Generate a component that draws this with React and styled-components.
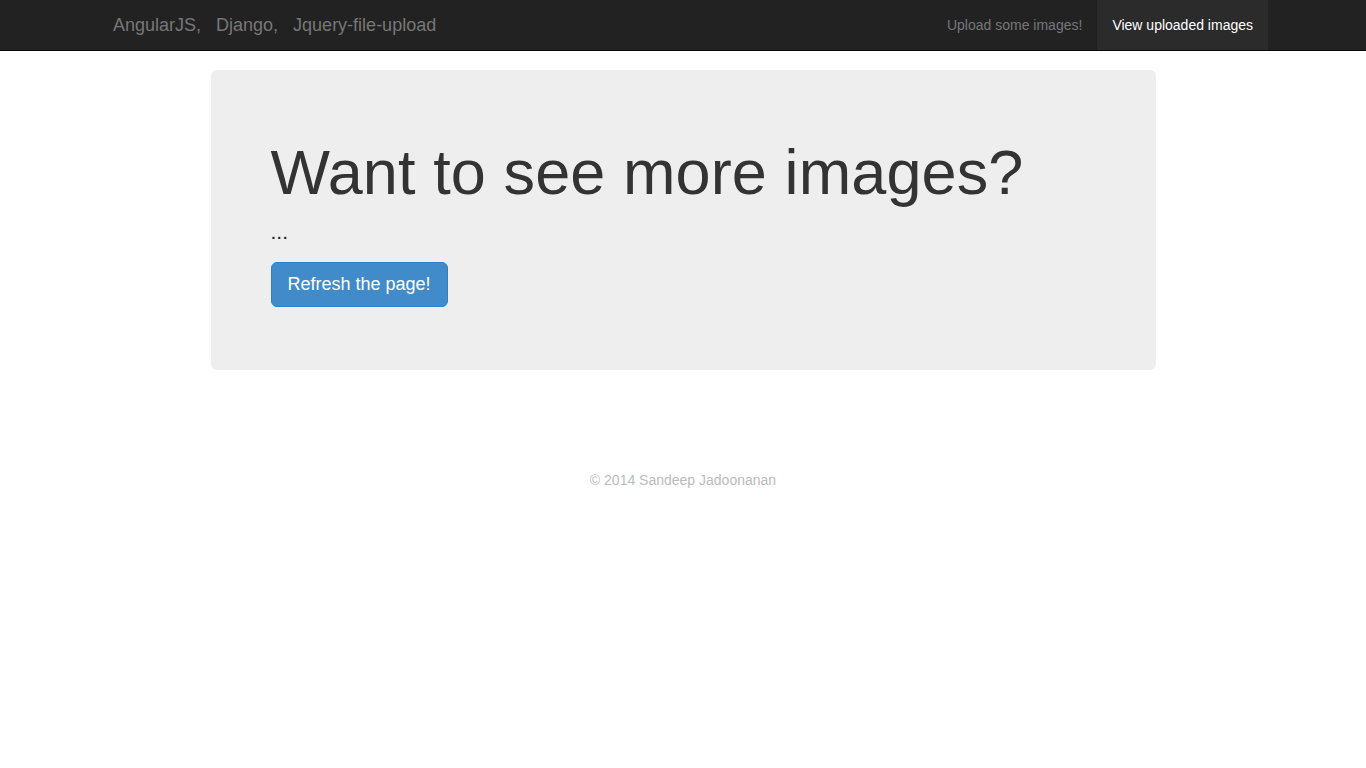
import styled, { createGlobalStyle } from 'styled-components'

const GlobalStyle = createGlobalStyle`
  * {
    box-sizing: border-box;
  }
  body {
    margin: 0;
    font-family: "Liberation Sans", Arial, sans-serif;
    font-size: 14px;
    line-height: 1.428571429;
    color: #333;
    background: #fff;
  }
`

const Navbar = styled.nav`
  height: 51px;
  background-color: #222;
  border-bottom: 1px solid #080808;
  margin-bottom: 19px;
`

const NavContainer = styled.div`
  width: 1170px;
  margin: 0 auto;
  padding: 0 15px;
  display: flex;
  justify-content: space-between;
  align-items: stretch;
  height: 50px;
`

const Brand = styled.a`
  display: flex;
  align-items: center;
  margin-left: -15px;
  padding: 15px;
  font-size: 18px;
  line-height: 20px;
  color: #777;
  text-decoration: none;
  white-space: pre;
`

const NavList = styled.ul`
  display: flex;
  list-style: none;
  margin: 0 -15px 0 0;
  padding: 0;
`

const NavLink = styled.a`
  display: block;
  padding: 15px;
  line-height: 20px;
  font-size: 14px;
  text-decoration: none;
  color: ${(props) => (props.active ? '#fff' : '#777')};
  background-color: ${(props) => (props.active ? '#2b2b2b' : 'transparent')};
`

const Jumbotron = styled.div`
  width: 945px;
  height: 300px;
  margin: 0 auto 30px;
  padding: 48px 60px;
  background-color: #eee;
  border-radius: 6px;
`

const Title = styled.h1`
  margin: 20px 0 10px;
  font-size: 63px;
  font-weight: 500;
  line-height: 1.1;
  letter-spacing: 0.1px;
  color: #333;
`

const Lead = styled.p`
  margin: 0 0 15px;
  font-size: 21px;
  font-weight: 200;
  line-height: 30px;
  color: #222;
`

const ButtonRow = styled.div`
  margin: 0;
`

const Button = styled.a`
  display: inline-block;
  padding: 10px 16px;
  font-size: 18px;
  line-height: 23px;
  color: #fff;
  background-color: #428bca;
  border: 1px solid #357ebd;
  border-radius: 6px;
  text-decoration: none;
  cursor: pointer;
`

const Footer = styled.footer`
  padding-top: 70px;
  text-align: center;
  color: #bbb;
  font-size: 14px;
  line-height: 20px;
`

const App = () => {
  return (
    <>
      <GlobalStyle />
      <Navbar>
        <NavContainer>
          <Brand href="#">{'AngularJS,   Django,   Jquery-file-upload'}</Brand>
          <NavList>
            <li>
              <NavLink href="#">Upload some images!</NavLink>
            </li>
            <li>
              <NavLink href="#" active>
                View uploaded images
              </NavLink>
            </li>
          </NavList>
        </NavContainer>
      </Navbar>
      <Jumbotron>
        <Title>Want to see more images?</Title>
        <Lead>...</Lead>
        <ButtonRow>
          <Button>Refresh the page!</Button>
        </ButtonRow>
      </Jumbotron>
      <Footer>© 2014 Sandeep Jadoonanan</Footer>
    </>
  )
}

export default App
